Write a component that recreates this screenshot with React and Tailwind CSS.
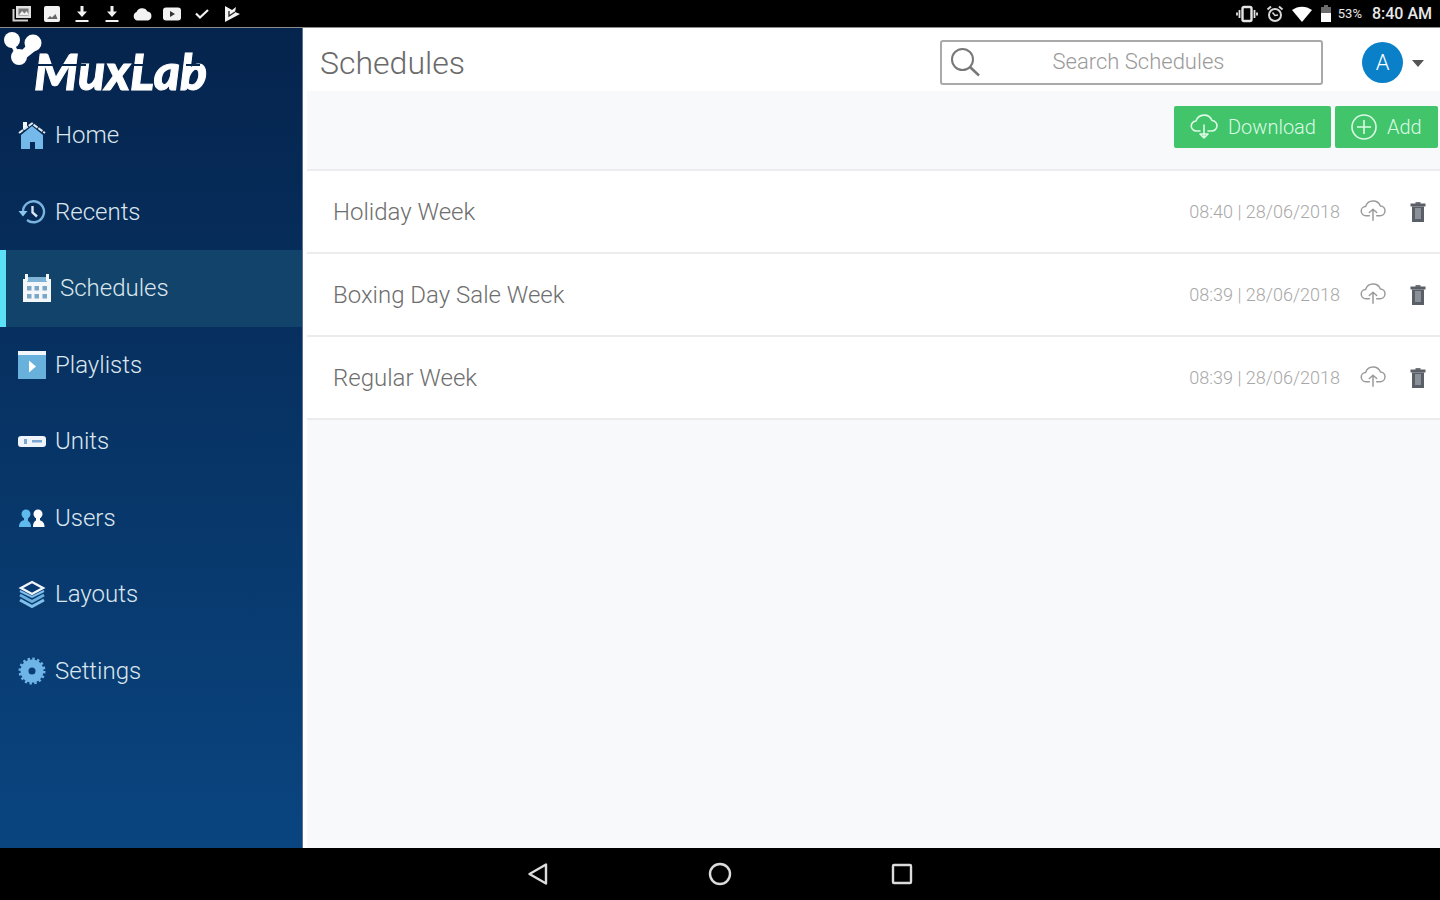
const LIGHT = '#7fc1ec';

function HomeIcon() {
  return (
    <svg viewBox="0 0 28 28" className="size-7">
      <path d="M3 14 14 5l11 9v14h-8v-7h-5v7H3z" fill="#74b9ea" />
      <path d="M5 1h4v4.500l-4 3.500z" fill="#f4f8fb" />
      <path d="M1 12 14 2.500 27 12" fill="none" stroke="#dfe9f1" strokeWidth="2" strokeDasharray="5 1" />
    </svg>
  );
}

function RecentsIcon() {
  return (
    <svg viewBox="0 0 28 28" className="size-7" fill="none">
      <path d="M5 14A10.500 10.500 0 1 1 9 22" stroke="#79b3e0" strokeWidth="2.400" />
      <path d="M0.500 13h9L5 18.500z" fill="#8cc6ee" />
      <path d="M14.500 8v6.500l4.500 4" stroke="#d7e6f2" strokeWidth="2.400" />
    </svg>
  );
}

function CalendarIcon() {
  return (
    <svg viewBox="0 0 28 28" className="size-7">
      <path d="M0 5h28v23H0z" fill="#f3f7fa" />
      <path d="M4 3h20v5H4z" fill="#7fb4d6" />
      <path d="M2 0h3v7H2zM23 0h3v7h-3z" fill="#f3f7fa" />
      <path
        d="M4 12h4.500v4.500H4zM11.500 12H16v4.500h-4.500zM19.500 12H24v4.500h-4.500zM4 20h4.500v4.500H4zM11.500 20H16v4.500h-4.500zM19.500 20H24v4.500h-4.500z"
        fill="#7ba6c4"
      />
    </svg>
  );
}

function PlaylistIcon() {
  return (
    <svg viewBox="0 0 28 28" className="size-7">
      <path d="M0 0h28v28H0z" fill="#69b1dd" />
      <path d="M0 0h28v4H0z" fill="#f1f7fb" />
      <path d="M11 9.500 18 15.500l-7 6z" fill="#fff" />
    </svg>
  );
}

function UnitsIcon() {
  return (
    <svg viewBox="0 0 28 28" className="size-7">
      <rect x="0" y="9" width="28" height="11" rx="3" fill="#eef4fa" />
      <path d="M6 12h3v5H6zM14 13h10v2.500H14z" fill="#7ba8d2" />
    </svg>
  );
}

function UsersIcon() {
  return (
    <svg viewBox="0 0 28 28" className="size-7">
      <g fill="#5fb9ec">
        <circle cx="8" cy="10" r="4.500" />
        <path d="M6 13h4v4H6z" />
        <path d="M1 23c0-5 3-6.500 6-7 3 .5 6 2 6 7z" />
      </g>
      <g fill="#fff">
        <circle cx="20" cy="10" r="4.500" />
        <path d="M18 13h4v4h-4z" />
        <path d="M15 23c0-5 2-6.500 5-7 3.500.5 6.500 2 6.500 7z" />
      </g>
    </svg>
  );
}

function LayoutsIcon() {
  return (
    <svg viewBox="0 0 28 28" className="size-7" fill="none">
      <path d="m2 20 12 6.500L26 20" stroke={LIGHT} strokeWidth="3" />
      <path d="m2 15 12 6.500L26 15" stroke="#6aaede" strokeWidth="3" />
      <path d="m2 11 12 6 12-6" stroke={LIGHT} strokeWidth="2" />
      <path d="M14 2 25 8l-11 6L3 8z" stroke="#f0f5fa" strokeWidth="2.400" />
    </svg>
  );
}

function SettingsIcon() {
  return (
    <svg viewBox="0 0 28 28" className="size-7" fill="none">
      <circle cx="14" cy="14" r="12" stroke="#6fb4e6" strokeWidth="3" strokeDasharray="2.356 2.356" />
      <circle cx="14" cy="14" r="7.500" stroke="#6fb4e6" strokeWidth="8" />
    </svg>
  );
}

function CloudArrow({ up, className }) {
  return (
    <svg viewBox="0 0 28 26" className={className} fill="none" stroke="currentColor" strokeWidth="1.600" strokeLinecap="round" strokeLinejoin="round">
      <path d="M10 17H6.500a5 5 0 0 1-.5-10 8.500 8.500 0 0 1 16-0.500 5.200 5.200 0 0 1-.5 10.500H18" />
      {up ? <path d="M14 22V10m-4 3.500 4-3.500 4 3.500" /> : <path d="M14 11v13m-4-4 4 4 4-4z" />}
    </svg>
  );
}

function TrashIcon() {
  return (
    <svg viewBox="0 0 16 20" className="h-5 w-4">
      <path d="M5.500 0h5v2h-5z" fill="#73777d" />
      <path d="M0.500 1.500h15V4.500h-15z" fill="#5a5e66" />
      <path d="M2 4.500h12V20H2z" fill="#5a5e66" />
      <path d="M5 6h6v11H5z" fill="#8b8f97" />
    </svg>
  );
}

function Logo() {
  return (
    <svg viewBox="0 0 220 80" className="h-20 w-[220px]" role="img" aria-label="MuxLab">
      <g fill="#fff">
        <circle cx="12" cy="11" r="8" />
        <circle cx="33" cy="14" r="8.500" />
        <circle cx="19" cy="28" r="8" />
        <path d="m21 22 8-8 6 8-10 8z" />
        <path d="m11 17 4-1 3 6-4 1z" />
        <text x="34" y="61" fontFamily="Lato, sans-serif" fontWeight="900" fontStyle="italic" fontSize="50" stroke="#fff" strokeWidth="1">
          MuxLab
        </text>
      </g>
      <path d="M36 36h50M134 36h18M186 36h14" stroke="#05264f" strokeWidth="2" />
    </svg>
  );
}

const NAV = [
  { label: 'Home', Icon: HomeIcon },
  { label: 'Recents', Icon: RecentsIcon },
  { label: 'Schedules', Icon: CalendarIcon, active: true },
  { label: 'Playlists', Icon: PlaylistIcon },
  { label: 'Units', Icon: UnitsIcon },
  { label: 'Users', Icon: UsersIcon },
  { label: 'Layouts', Icon: LayoutsIcon },
  { label: 'Settings', Icon: SettingsIcon },
];

const SCHEDULES = [
  { name: 'Holiday Week', date: '08:40 | 28/06/2018' },
  { name: 'Boxing Day Sale Week', date: '08:39 | 28/06/2018' },
  { name: 'Regular Week', date: '08:39 | 28/06/2018' },
];

function StatusBar() {
  return (
    <div className="flex h-[27px] shrink-0 items-center justify-between bg-black pr-2 pl-3 text-[#e8e8e8]">
      <div className="flex items-center gap-[10px]">
        <svg viewBox="0 0 20 16" className="h-4 w-5">
          <path d="M4 0h15v12H4z" fill="#e0e0e0" />
          <path d="M1.500 3v11.500H16" fill="none" stroke="#d0d0d0" strokeWidth="2" />
          <path d="M6.500 2.500h10v7h-10z" fill="#777" />
          <path d="m7 9 3-4 2.500 2.500L14.500 5 17 9z" fill="#eee" />
        </svg>
        <svg viewBox="0 0 20 16" className="h-4 w-5">
          <rect x="2" y="0" width="16" height="16" rx="2" fill="#f2f2f2" />
          <path d="m5 13 3-3 2 1.500L13.500 8l2 5z" fill="#666" />
        </svg>
        {[0, 1].map((i) => (
          <svg key={i} viewBox="0 0 20 16" className="h-4 w-5" fill="#f2f2f2">
            <path d="M8.500 0h3v5.500H15L10 11 5 5.500h3.500zM3.500 14h13v2h-13z" />
          </svg>
        ))}
        <svg viewBox="0 0 20 16" className="h-4 w-5" fill="#f2f2f2">
          <path d="M5 14.500a4.500 4.500 0 0 1-.5-8.500 6 6 0 0 1 11-.5 4.600 4.600 0 0 1 .5 9z" />
        </svg>
        <svg viewBox="0 0 20 16" className="h-4 w-5">
          <rect x="1" y="1.500" width="18" height="13" rx="3" fill="#f2f2f2" />
          <path d="m8 5 5 3-5 3z" fill="#333" />
        </svg>
        <svg viewBox="0 0 20 16" className="h-4 w-5" fill="none" stroke="#f2f2f2" strokeWidth="2.200">
          <path d="m4 7.500 4 4L16 4" />
        </svg>
        <svg viewBox="0 0 20 16" className="h-4 w-5">
          <path d="M3 0l7 4 4-3-1 5 5 2-15 8z" fill="#f2f2f2" />
          <path d="M7 5v5l6-4" fill="none" stroke="#222" strokeWidth="1.300" />
        </svg>
      </div>
      <div className="flex items-center">
        <svg viewBox="0 0 22 18" className="mr-2 h-[18px] w-[22px]" fill="none" stroke="#e4e4e4">
          <rect x="6.500" y="2" width="9" height="14" rx="1.500" strokeWidth="2.400" />
          <path d="M3.500 5v8M18.500 5v8M1 7.500v3M21 7.500v3" strokeWidth="1.800" />
        </svg>
        <svg viewBox="0 0 18 18" className="mr-2 size-[18px]" fill="none" stroke="#d8d8d8">
          <circle cx="9" cy="10" r="6" strokeWidth="2" />
          <path d="M1.500 4.500 5 1.500M16.500 4.500 13 1.500" strokeWidth="2" />
          <path d="M6.500 7.500 9 10.500l3-.5" strokeWidth="1.500" />
        </svg>
        <svg viewBox="0 0 20 16" className="mr-2 h-4 w-5" fill="#fff">
          <path d="M0 4C6-.5 14-.5 20 4L10 16z" />
        </svg>
        <svg viewBox="0 0 12 18" className="mr-[6px] h-[18px] w-3">
          <path d="M4 0h4v2h3v6H1V2h3z" fill="#6b6b6b" />
          <path d="M1 8h10v9H1z" fill="#fff" />
        </svg>
        <span className="mr-[10px] text-[13px] leading-5">53%</span>
        <span className="text-[16px] leading-5 font-medium">8:40 AM</span>
      </div>
    </div>
  );
}

function Sidebar() {
  return (
    <aside className="flex w-[303px] shrink-0 flex-col border-r border-[#5d7190] bg-linear-to-b from-[#05244d] to-[#0a4580]">
      <div className="h-[69px] pt-px">
        <Logo />
      </div>
      <nav aria-label="Main">
        <ul className="grid h-[612px] auto-rows-fr">
          {NAV.map(({ label, Icon, active }) => (
            <li key={label} className="flex">
              <a
                href="#"
                aria-current={active ? 'page' : undefined}
                className={
                  active
                    ? 'flex flex-1 items-center gap-[9px] border-l-6 border-[#5be0f5] bg-[#12436a] pl-[17px] text-[24px] leading-8 font-light text-[#dce6ee]'
                    : 'flex flex-1 items-center gap-[9px] pl-[18px] text-[24px] leading-8 font-light text-[#dce6ee]'
                }
              >
                <Icon />
                {label}
              </a>
            </li>
          ))}
        </ul>
      </nav>
    </aside>
  );
}

function Header() {
  return (
    <header className="flex h-[63px] shrink-0 items-center bg-white pl-[13px]">
      <h1 className="flex-1 pt-[6px] text-[32px] leading-10 font-light text-[#6a6a6a]">Schedules</h1>
      <label className="mt-[5px] mr-[39px] flex h-[45px] w-[383px] items-center rounded-[3px] border-2 border-[#a9a9a9] pl-2">
        <svg viewBox="0 0 30 30" className="size-[30px] shrink-0" fill="none" stroke="#777" strokeWidth="2">
          <circle cx="12.500" cy="12.500" r="10.500" />
          <path d="m20 20 9 8.500" strokeWidth="2.500" />
        </svg>
        <input
          type="text"
          aria-label="Search Schedules"
          placeholder="Search Schedules"
          className="min-w-0 flex-1 bg-transparent pr-[24px] text-center text-[22px] leading-8 font-light outline-none placeholder:text-[#9a9a9a]"
        />
      </label>
      <button type="button" aria-label="Account" className="mt-[6px] mr-[16px] flex items-center gap-[9px]">
        <span className="flex size-[41px] items-center justify-center rounded-full bg-[#0980c8] text-[22px] leading-8 font-light text-white">
          A
        </span>
        <svg viewBox="0 0 12 8" className="mt-[3px] h-2 w-3" fill="#555">
          <path d="M0 0h12L6 7z" />
        </svg>
      </button>
    </header>
  );
}

function Toolbar() {
  const button = 'flex h-[42px] items-center rounded-[2px] bg-[#41c46a] text-[20px] leading-8 font-light text-[#dcfae5]';
  return (
    <div className="flex h-[80px] shrink-0 items-start justify-end gap-1 border-b-2 border-[#ececee] pt-[15px] pr-[2px]">
      <button type="button" className={button + ' w-[157px] gap-[10px] pl-4'}>
        <CloudArrow className="h-[26px] w-7" />
        Download
      </button>
      <button type="button" className={button + ' w-[103px] gap-[10px] pl-4'}>
        <svg viewBox="0 0 26 26" className="size-[26px]" fill="none" stroke="currentColor" strokeWidth="1.600">
          <circle cx="13" cy="13" r="12" />
          <path d="M13 6v14M6 13h14" />
        </svg>
        Add
      </button>
    </div>
  );
}

export default function App() {
  return (
    <div className="flex min-h-screen flex-col bg-black font-[Roboto,'Liberation_Sans',sans-serif]">
      <StatusBar />
      <div className="flex flex-1 border-t border-[#8c8c8c]">
        <Sidebar />
        <main className="flex min-w-0 flex-1 flex-col bg-white pl-1">
          <Header />
          <div className="flex flex-1 flex-col bg-[#f8f9fb]">
            <Toolbar />
            <ul>
              {SCHEDULES.map(({ name, date }) => (
                <li key={name} className="flex h-[83px] items-center border-b-2 border-[#ececee] bg-white pr-[14px] pl-[26px]">
                  <span className="flex-1 text-[24px] leading-8 font-light text-[#6e6e6e]">{name}</span>
                  <time className="mr-[20px] text-[18px] leading-8 font-light text-[#a8a8a8]">{date}</time>
                  <button type="button" aria-label={'Upload ' + name} className="mr-[24px] text-[#9a9a9a]">
                    <CloudArrow up className="h-6 w-[26px]" />
                  </button>
                  <button type="button" aria-label={'Delete ' + name}>
                    <TrashIcon />
                  </button>
                </li>
              ))}
            </ul>
          </div>
        </main>
      </div>
      <footer className="flex h-[52px] shrink-0 items-center justify-center gap-[158px] bg-black">
        <button type="button" aria-label="Back">
          <svg viewBox="0 0 24 24" className="size-6" fill="none" stroke="#dcdcdc" strokeWidth="2.400" strokeLinejoin="round">
            <path d="M20 2.500v19L3.500 12z" />
          </svg>
        </button>
        <button type="button" aria-label="Home screen">
          <svg viewBox="0 0 24 24" className="size-6" fill="none" stroke="#dcdcdc" strokeWidth="2.400">
            <circle cx="12" cy="12" r="10" />
          </svg>
        </button>
        <button type="button" aria-label="Recent apps">
          <svg viewBox="0 0 24 24" className="size-6" fill="none" stroke="#dcdcdc" strokeWidth="2.400">
            <rect x="3" y="3" width="18" height="18" rx="1" />
          </svg>
        </button>
      </footer>
    </div>
  );
}
